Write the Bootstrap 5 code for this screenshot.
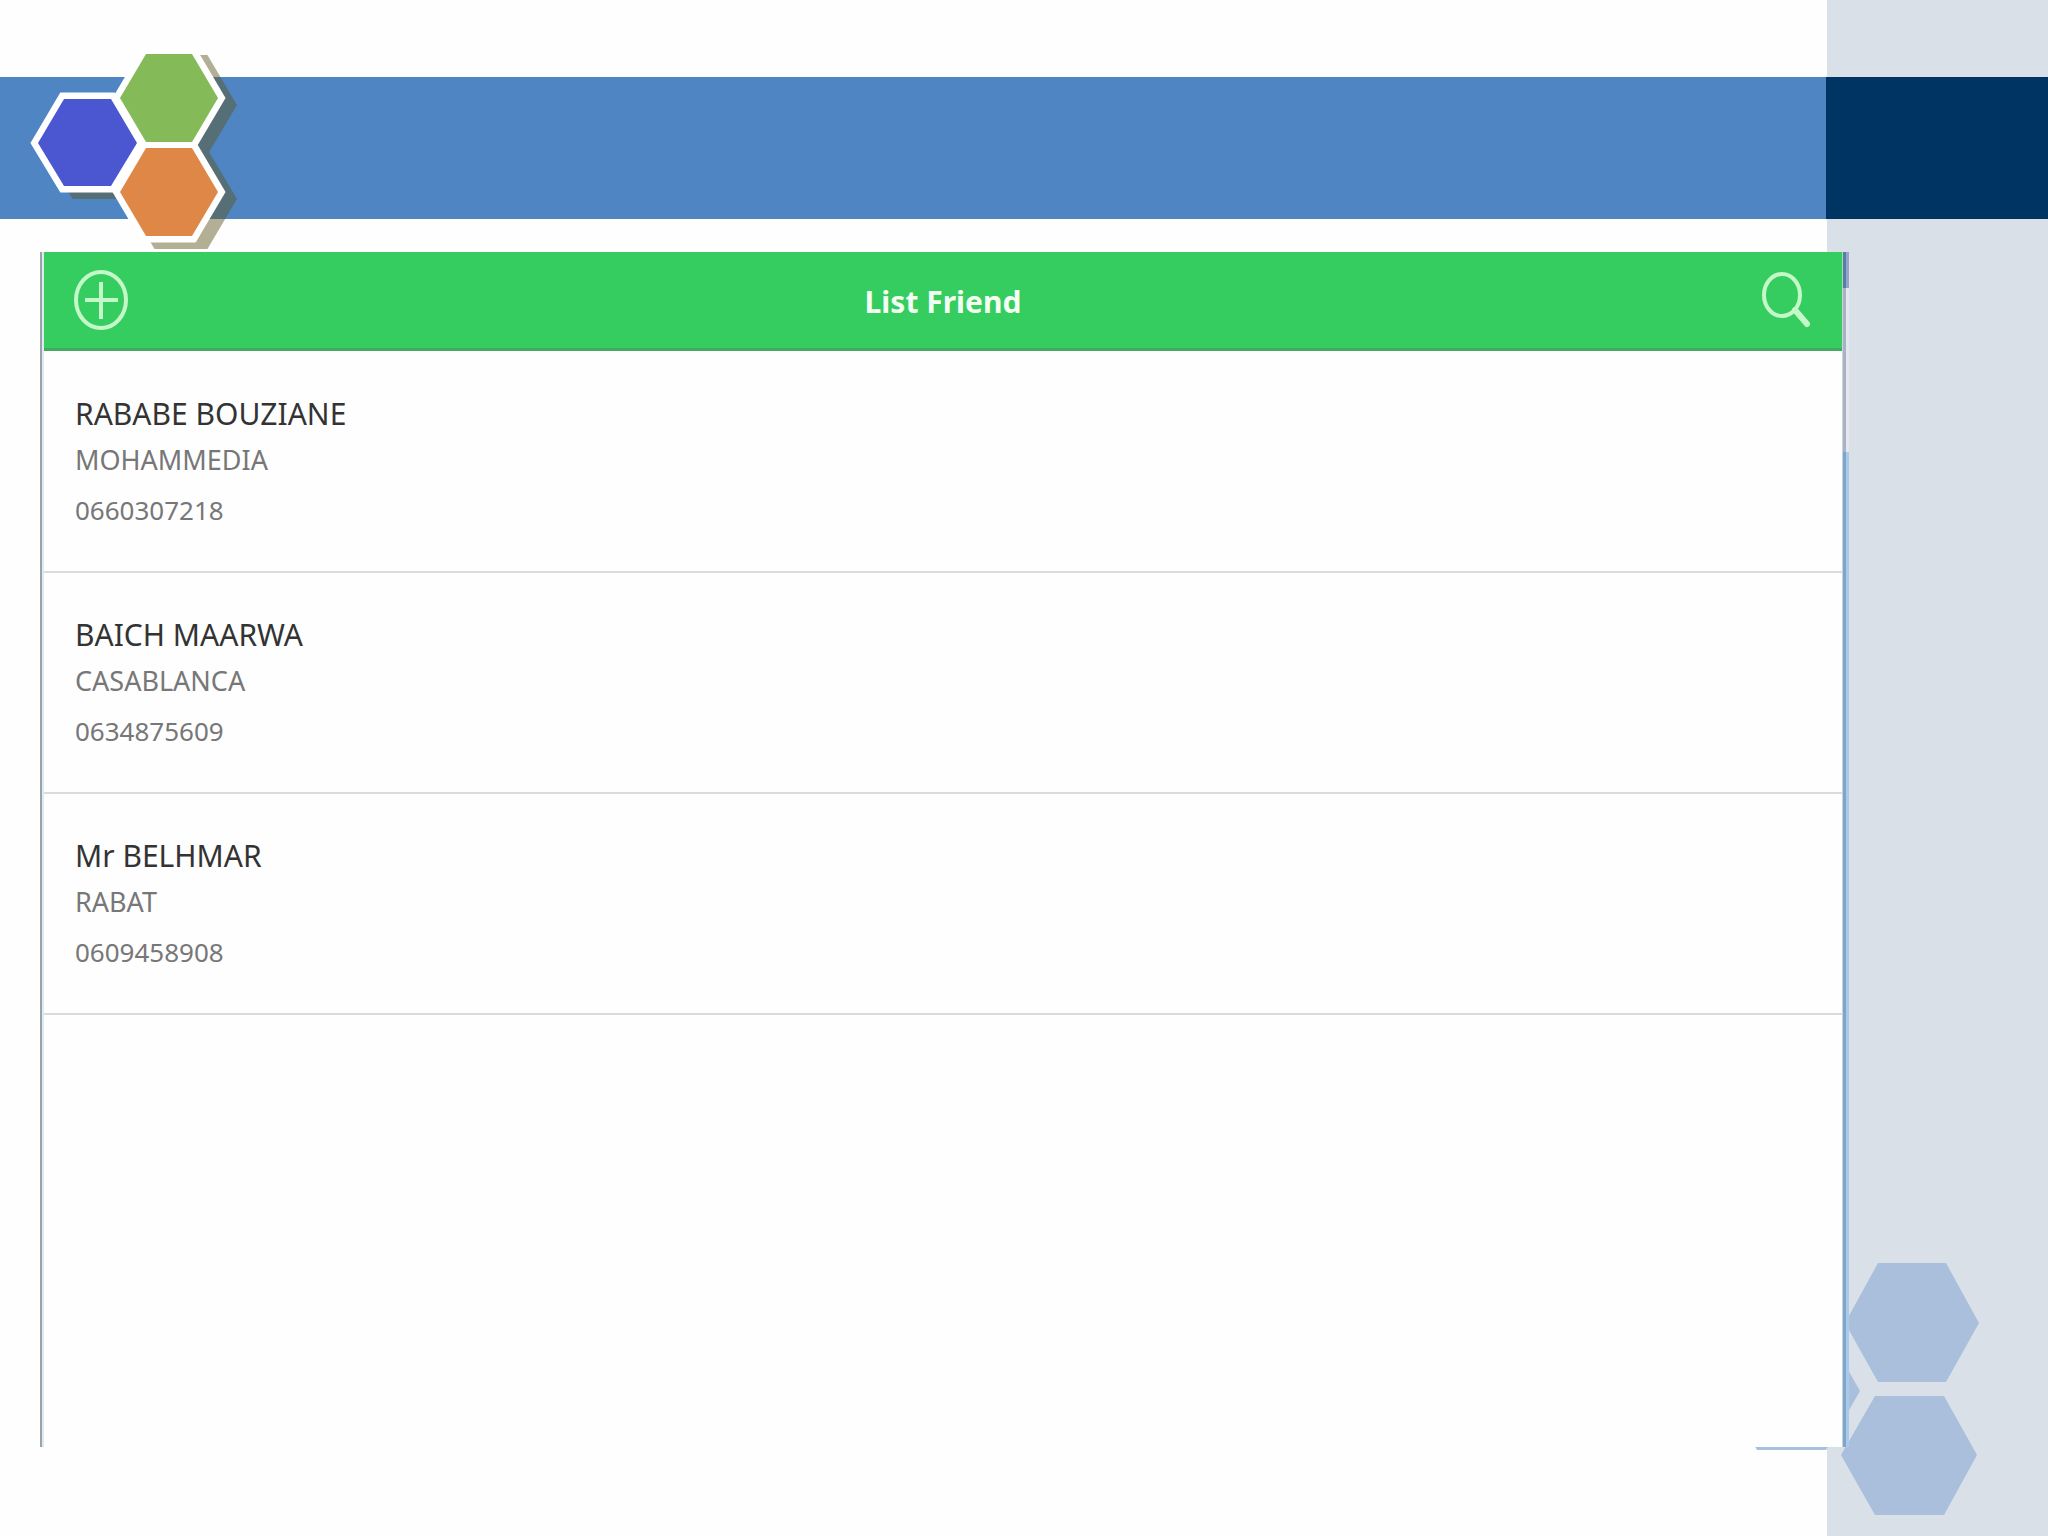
<!DOCTYPE html>
<html lang="en">
<head>
<meta charset="utf-8">
<meta name="viewport" content="width=device-width, initial-scale=1">
<title>List Friend</title>
<link href="https://cdn.jsdelivr.net/npm/bootstrap@5.3.0/dist/css/bootstrap.min.css" rel="stylesheet">
<style>
  :root { --rail: 221px; }
  body { font-family: "Noto Sans", "Open Sans", sans-serif; background: #fefefe; }
  .slide { background: linear-gradient(to left, #d9e0e8 var(--rail), #fefefe var(--rail)); padding-top: 77px; }
  .band { height: 142px; background: #5085c4; }
  .band-end { width: 222px; background: #003463; }
  .logo { left: 24px; top: 48px; z-index: 2; }
  .hexes { right: 60px; bottom: 16px; }
  .panel { margin: 33px 199px 89px 40px; min-height: calc(100vh - 341px); }
  .sheet { background: #fefefe; }
  .edge-start { width: 4px; background: linear-gradient(to right, #9aa3ab 2px, #dfe9ee 2px); }
  .edge-end { width: 7px; background: linear-gradient(to right, #c2d3e4 1px, #7fa5c9 1px 4px, #abc9ea 4px); }
  .edge-cap { height: 164px; background: linear-gradient(to right, #ccd3de 1px, #a9b1c4 1px 4px, #e3e7ef 4px); }
  .edge-tip { height: 36px; background: linear-gradient(to right, #a7dbc4 1px, #577f9e 1px 4px, #96a3cf 4px); }
  .appbar { height: 99px; background: #35cd5f; border-bottom: 3px solid #46a863; padding: 0 28px; color: #f3fff3; }
  .appbar h1 { font-size: 30px; line-height: 40px; padding-top: 4px; }
  .icon-btn { color: #c4f8c8; }
  .friends { padding-top: 1px; }
  .friend { height: 221px; padding: 40px 30px 0 31px; border-bottom: 2px solid #d8dcdc; }
  .friend h2 { font-size: 30px; line-height: 43px; color: #333; }
  .friend p { font-size: 26px; line-height: 50px; color: #777; }
  .friend .city { font-size: 27px; }
</style>
<script src="https://cdn.jsdelivr.net/npm/bootstrap@5.3.0/dist/js/bootstrap.bundle.min.js"></script>
</head>
<body>
<div class="slide position-relative min-vh-100 overflow-hidden">
  <header class="band d-flex justify-content-end"><div class="band-end"></div></header>

  <svg class="logo position-absolute" width="220" height="204" viewBox="24 48 220 204" role="img" aria-label="Logo">
    <defs>
      <clipPath id="top"><rect x="24" y="53" width="220" height="200"/></clipPath>
      <g id="cells">
        <path d="M38 143 64 99H111L137 143 111 186H64Z"/>
        <path d="M120 98 146 54H192L218 98 192 142H146Z"/>
        <path d="M120 192 146 148H192L218 192 192 236H146Z"/>
      </g>
    </defs>
    <g clip-path="url(#top)"><use href="#cells" x="12" y="7" fill="#5e5720" stroke="#5e5720" stroke-width="12" opacity=".47"/></g>
    <use href="#cells" fill="#fff" stroke="#fff" stroke-width="13"/>
    <path d="M38 143 64 99H111L137 143 111 186H64Z" fill="#4b56d1"/>
    <path d="M120 98 146 54H192L218 98 192 142H146Z" fill="#84ba57"/>
    <path d="M120 192 146 148H192L218 192 192 236H146Z" fill="#de8747"/>
  </svg>

  <svg class="hexes position-absolute" width="268" height="260" viewBox="1720 1260 268 260" aria-hidden="true" fill="#a9bfdc">
    <path d="M1845 1323 1878 1263H1946L1979 1323 1946 1382H1878Z"/>
    <path d="M1841 1455 1875 1396H1944L1977 1455 1944 1515H1875Z"/>
    <path d="M1722 1391 1757 1331H1826L1860 1391 1826 1450H1757Z"/>
  </svg>

  <main class="panel d-flex position-relative">
    <div class="edge-start"></div>
    <div class="sheet flex-grow-1">
      <div class="appbar d-flex align-items-center justify-content-between">
        <button class="icon-btn btn p-0 border-0" type="button" aria-label="Add friend">
          <svg class="d-block" width="58" height="64" viewBox="0 0 58 64" fill="none" stroke="currentColor" stroke-width="4"><ellipse cx="29" cy="32" rx="25" ry="28"/><path d="M13 32H46M29 14V51"/></svg>
        </button>
        <h1 class="mb-0 fw-bold">List Friend</h1>
        <button class="icon-btn btn p-0 border-0" type="button" aria-label="Search">
          <svg class="d-block" width="58" height="64" viewBox="0 0 58 64" fill="none" stroke="currentColor" stroke-width="4"><ellipse cx="26" cy="27" rx="18" ry="21"/><path d="M39 42 51 56" stroke-width="6" stroke-linecap="round"/></svg>
        </button>
      </div>
      <ul class="friends list-unstyled mb-0">
        <li class="friend"><h2 class="m-0 fw-normal">RABABE BOUZIANE</h2><p class="city m-0">MOHAMMEDIA</p><p class="m-0">0660307218</p></li>
        <li class="friend"><h2 class="m-0 fw-normal">BAICH MAARWA</h2><p class="city m-0">CASABLANCA</p><p class="m-0">0634875609</p></li>
        <li class="friend"><h2 class="m-0 fw-normal">Mr BELHMAR</h2><p class="city m-0">RABAT</p><p class="m-0">0609458908</p></li>
      </ul>
    </div>
    <div class="edge-end"><div class="edge-tip"></div><div class="edge-cap"></div></div>
  </main>
</div>
</body>
</html>
